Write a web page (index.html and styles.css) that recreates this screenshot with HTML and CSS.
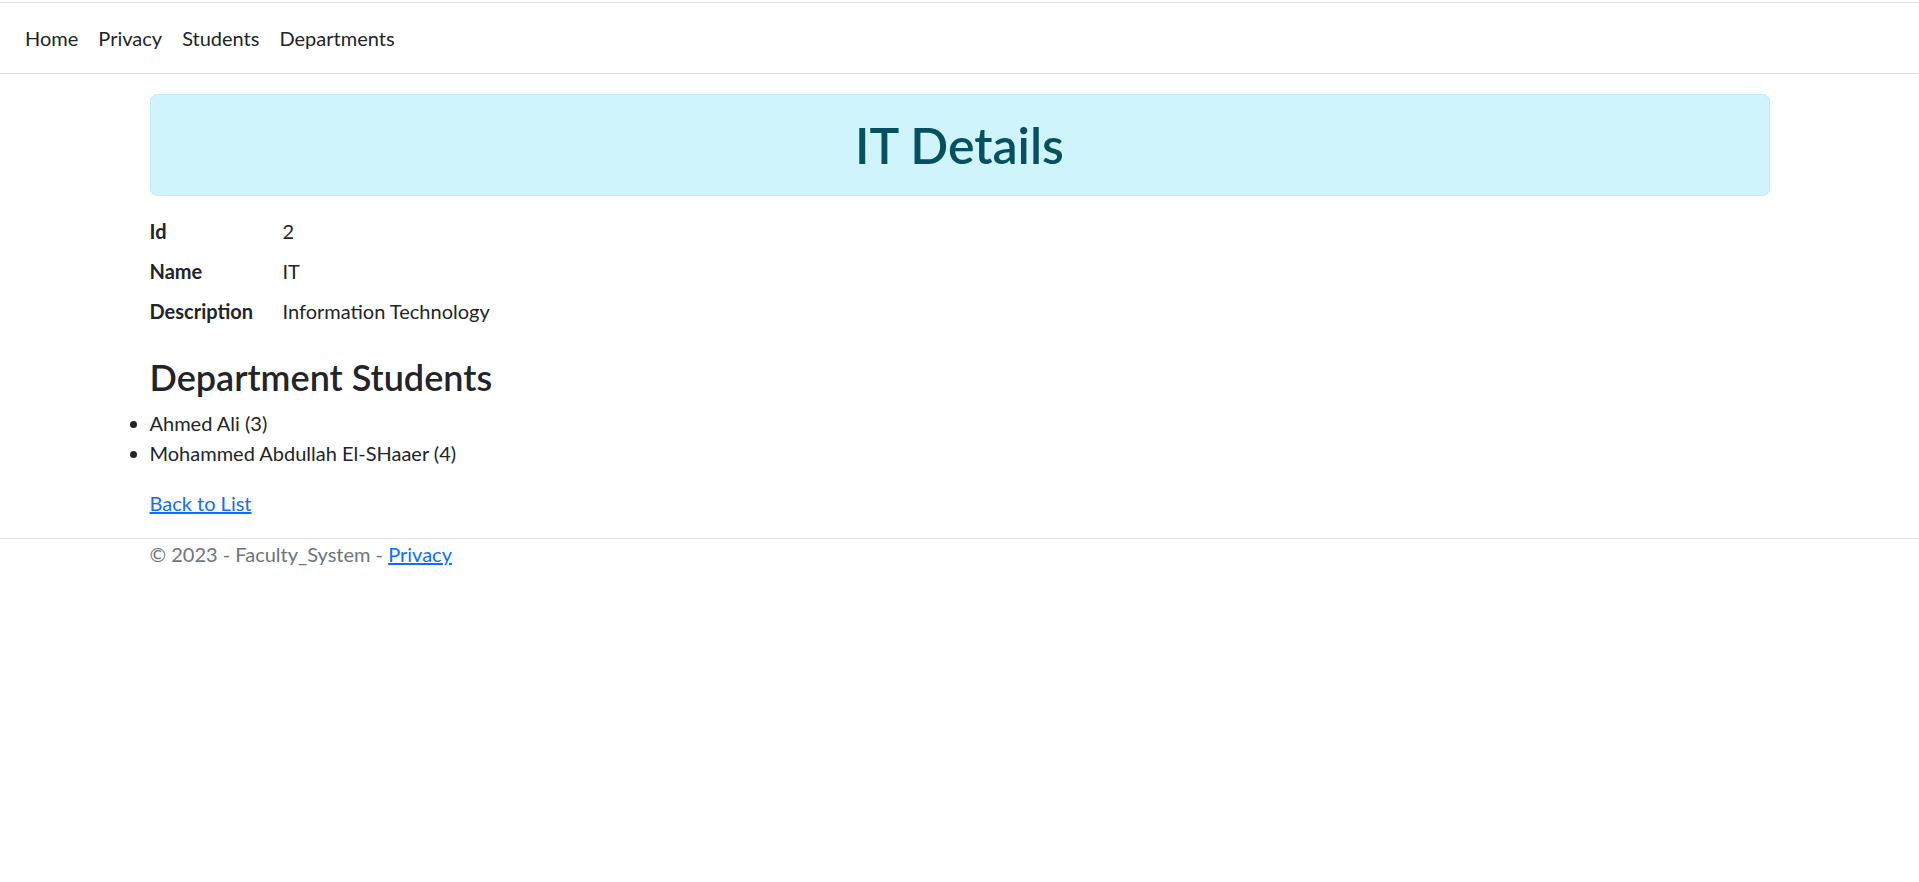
FILE: index.html
```html
<!DOCTYPE html>
<html lang="en">
<head>
<meta charset="utf-8">
<title>IT Details - Faculty_System</title>
<link rel="stylesheet" href="styles.css">
</head>
<body>
<div class="topline"></div>
<header>
  <nav class="navbar">
    <ul class="nav">
      <li><a class="nav-link" href="#">Home</a></li>
      <li><a class="nav-link" href="#">Privacy</a></li>
      <li><a class="nav-link" href="#">Students</a></li>
      <li><a class="nav-link" href="#">Departments</a></li>
    </ul>
  </nav>
</header>
<main class="container">
  <div class="alert">
    <h1 class="title">IT Details</h1>
  </div>
  <dl class="details">
    <dt>Id</dt><dd>2</dd>
    <dt>Name</dt><dd>IT</dd>
    <dt>Description</dt><dd>Information Technology</dd>
  </dl>
  <h3 class="subtitle">Department Students</h3>
  <ul class="students">
    <li>Ahmed Ali (3)</li>
    <li>Mohammed Abdullah El-SHaaer (4)</li>
  </ul>
  <div><a class="link" href="#">Back to List</a></div>
</main>
<footer class="footer">
  <div class="container">&copy; 2023 - Faculty_System - <a class="link" href="#">Privacy</a></div>
</footer>
</body>
</html>
```
FILE: styles.css
```css
* { box-sizing: border-box; }
html, body { margin: 0; padding: 0; }
body {
  font-family: Lato, "Noto Sans", sans-serif;
  font-size: 20px;
  line-height: 30px;
  color: #212529;
  background: #fff;
}
.topline {
  height: 3px;
  border-bottom: 1px solid #e2e2e2;
}
.navbar {
  padding: 10px 15px;
  border-bottom: 1px solid #dee2e6;
  margin-bottom: 20px;
  background: #fff;
}
.nav {
  display: flex;
  list-style: none;
  margin: 0;
  padding: 0;
}
.nav-link {
  display: block;
  padding: 10px 10px;
  color: #212529;
  text-decoration: none;
}
.container {
  max-width: 1650px;
  margin: 0 auto;
  padding: 0 15px;
}
main.container { padding-bottom: 20px; }
.alert {
  background: #cff4fc;
  border: 1px solid #b6effb;
  border-radius: 7.5px;
  padding: 20px;
  margin-bottom: 20px;
  color: #055160;
}
.title {
  margin: 0;
  text-align: center;
  font-size: 50px;
  line-height: 60px;
  font-weight: 600;
}
.details {
  display: grid;
  grid-template-columns: 133px 1fr;
  margin: 0 0 20px 0;
}
.details dt { font-weight: 700; margin-bottom: 10px; }
.details dd { margin: 0 0 10px 0; }
.subtitle {
  font-size: 36px;
  line-height: 42px;
  font-weight: 600;
  margin: 0 0 10px 0;
}
.students {
  margin: 0 0 20px 0;
  padding-left: 0;
}
.link { color: #0d6efd; text-decoration: underline; }
.footer {
  border-top: 1px solid #dee2e6;
  color: #6c757d;
}
```
